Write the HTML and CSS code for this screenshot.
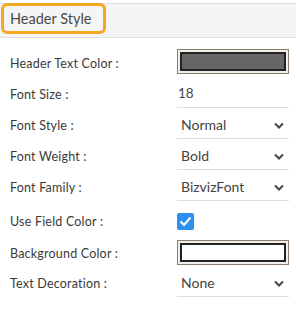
FILE: index.html
```html
<!DOCTYPE html>
<html>
<head>
<meta charset="utf-8">
<link rel="stylesheet" href="styles.css">
</head>
<body>
<div class="header">
  <div class="header-title">Header Style</div>
</div>
<div class="form">
  <div class="row r-color">
    <div class="label">Header Text Color :</div>
    <div class="control"><div class="swatch"><div class="swatch-inner dark"></div></div></div>
  </div>
  <div class="row">
    <div class="label">Font Size :</div>
    <div class="control input">18</div>
  </div>
  <div class="row">
    <div class="label">Font Style :</div>
    <div class="control select"><span>Normal</span><svg class="chev" width="10" height="7" viewBox="0 0 10 7"><polyline points="1,1.5 5,5.5 9,1.5" fill="none" stroke="#444" stroke-width="2"/></svg></div>
  </div>
  <div class="row">
    <div class="label">Font Weight :</div>
    <div class="control select"><span>Bold</span><svg class="chev" width="10" height="7" viewBox="0 0 10 7"><polyline points="1,1.5 5,5.5 9,1.5" fill="none" stroke="#444" stroke-width="2"/></svg></div>
  </div>
  <div class="row">
    <div class="label">Font Family :</div>
    <div class="control select"><span>BizvizFont</span><svg class="chev" width="10" height="7" viewBox="0 0 10 7"><polyline points="1,1.5 5,5.5 9,1.5" fill="none" stroke="#444" stroke-width="2"/></svg></div>
  </div>
  <div class="row r-check">
    <div class="label">Use Field Color :</div>
    <div class="control"><div class="checkbox"><svg width="17" height="17" viewBox="0 0 17 17"><polyline points="3.5,8.5 7,12 13.5,4.5" fill="none" stroke="#fff" stroke-width="2"/></svg></div></div>
  </div>
  <div class="row r-bg">
    <div class="label">Background Color :</div>
    <div class="control"><div class="swatch"><div class="swatch-inner light"></div></div></div>
  </div>
  <div class="row">
    <div class="label">Text Decoration :</div>
    <div class="control select"><span>None</span><svg class="chev" width="10" height="7" viewBox="0 0 10 7"><polyline points="1,1.5 5,5.5 9,1.5" fill="none" stroke="#444" stroke-width="2"/></svg></div>
  </div>
</div>
</body>
</html>
```
FILE: styles.css
```css
html, body {
  margin: 0;
  padding: 0;
  background: #fff;
}
body {
  font-family: Lato, "Open Sans", sans-serif;
  color: #333;
}
.header {
  margin-top: 3px;
  height: 33px;
  background: #f5f5f5;
  border-top: 1px solid #dedede;
  border-bottom: 1px solid #dedede;
  display: flex;
  align-items: flex-start;
}
.header-title {
  margin-top: -1px;
  margin-left: 1px;
  width: 93px;
  height: 25px;
  border: 3px solid #f5a623;
  border-radius: 6px;
  padding-left: 6px;
  font-size: 14.5px;
  line-height: 25px;
  color: #4a4a4a;
}
.form {
  padding-top: 8px;
}
.row {
  display: flex;
  align-items: stretch;
  height: 31px;
}
.label {
  width: 167px;
  padding-left: 10px;
  padding-top: 3px;
  display: flex;
  align-items: center;
  font-size: 12.5px;
  letter-spacing: 0.2px;
  color: #3a3a3a;
}
.control {
  width: 112px;
  box-sizing: border-box;
  display: flex;
  align-items: center;
}
.input, .select {
  border-bottom: 1px solid #dcdcdc;
  padding-top: 2px;
  font-size: 14px;
  color: #444;
}
.input {
  padding-left: 1px;
  font-size: 13.5px;
}
.select {
  padding-left: 4px;
  justify-content: space-between;
  padding-right: 5px;
}
.chev {
  display: block;
  margin-top: 2px;
}
.swatch {
  width: 112px;
  height: 25px;
  box-sizing: border-box;
  border: 1px solid #8b7d6e;
  background: #f0efee;
  padding: 2px;
}
.swatch-inner {
  width: 100%;
  height: 100%;
  box-sizing: border-box;
  border: 2px solid #222;
}
.swatch-inner.dark {
  background: #676767;
}
.swatch-inner.light {
  background: #fff;
}
.r-check {
  height: 37px;
}
.r-check .control {
  padding-top: 3px;
}
.checkbox {
  width: 17px;
  height: 17px;
  border-radius: 2px;
  background: #2d8ff0;
}
.checkbox svg {
  display: block;
}
.r-bg {
  height: 28px;
}
```
